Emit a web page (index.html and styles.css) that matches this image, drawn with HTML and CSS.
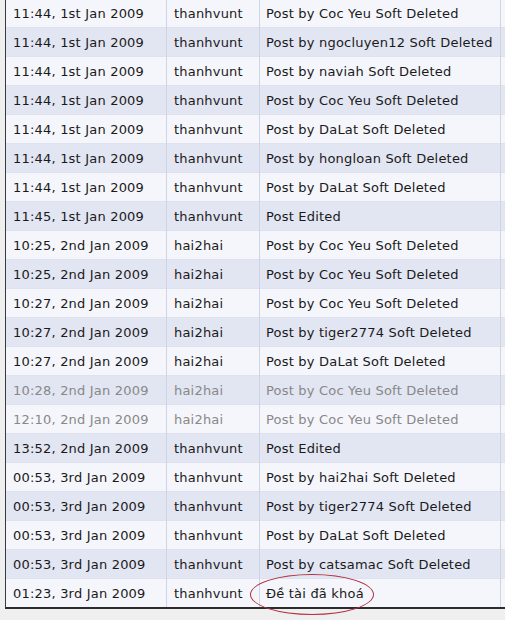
FILE: index.html
```html
<!DOCTYPE html>
<html>
<head>
<meta charset="utf-8">
<link rel="stylesheet" href="styles.css">
</head>
<body>
<div class="frame">
<table class="log">
<tr class="r1"><td>11:44, 1st Jan 2009</td><td>thanhvunt</td><td>Post by Coc Yeu Soft Deleted</td><td class="x"></td></tr>
<tr class="r2"><td>11:44, 1st Jan 2009</td><td>thanhvunt</td><td>Post by ngocluyen12 Soft Deleted</td><td class="x"></td></tr>
<tr class="r1"><td>11:44, 1st Jan 2009</td><td>thanhvunt</td><td>Post by naviah Soft Deleted</td><td class="x"></td></tr>
<tr class="r2"><td>11:44, 1st Jan 2009</td><td>thanhvunt</td><td>Post by Coc Yeu Soft Deleted</td><td class="x"></td></tr>
<tr class="r1"><td>11:44, 1st Jan 2009</td><td>thanhvunt</td><td>Post by DaLat Soft Deleted</td><td class="x"></td></tr>
<tr class="r2"><td>11:44, 1st Jan 2009</td><td>thanhvunt</td><td>Post by hongloan Soft Deleted</td><td class="x"></td></tr>
<tr class="r1"><td>11:44, 1st Jan 2009</td><td>thanhvunt</td><td>Post by DaLat Soft Deleted</td><td class="x"></td></tr>
<tr class="r2"><td>11:45, 1st Jan 2009</td><td>thanhvunt</td><td>Post Edited</td><td class="x"></td></tr>
<tr class="r1"><td>10:25, 2nd Jan 2009</td><td>hai2hai</td><td>Post by Coc Yeu Soft Deleted</td><td class="x"></td></tr>
<tr class="r2"><td>10:25, 2nd Jan 2009</td><td>hai2hai</td><td>Post by Coc Yeu Soft Deleted</td><td class="x"></td></tr>
<tr class="r1"><td>10:27, 2nd Jan 2009</td><td>hai2hai</td><td>Post by Coc Yeu Soft Deleted</td><td class="x"></td></tr>
<tr class="r2"><td>10:27, 2nd Jan 2009</td><td>hai2hai</td><td>Post by tiger2774 Soft Deleted</td><td class="x"></td></tr>
<tr class="r1"><td>10:27, 2nd Jan 2009</td><td>hai2hai</td><td>Post by DaLat Soft Deleted</td><td class="x"></td></tr>
<tr class="r2 faded"><td>10:28, 2nd Jan 2009</td><td>hai2hai</td><td>Post by Coc Yeu Soft Deleted</td><td class="x"></td></tr>
<tr class="r1 faded"><td>12:10, 2nd Jan 2009</td><td>hai2hai</td><td>Post by Coc Yeu Soft Deleted</td><td class="x"></td></tr>
<tr class="r2"><td>13:52, 2nd Jan 2009</td><td>thanhvunt</td><td>Post Edited</td><td class="x"></td></tr>
<tr class="r1"><td>00:53, 3rd Jan 2009</td><td>thanhvunt</td><td>Post by hai2hai Soft Deleted</td><td class="x"></td></tr>
<tr class="r2"><td>00:53, 3rd Jan 2009</td><td>thanhvunt</td><td>Post by tiger2774 Soft Deleted</td><td class="x"></td></tr>
<tr class="r1"><td>00:53, 3rd Jan 2009</td><td>thanhvunt</td><td>Post by DaLat Soft Deleted</td><td class="x"></td></tr>
<tr class="r2"><td>00:53, 3rd Jan 2009</td><td>thanhvunt</td><td>Post by catsamac Soft Deleted</td><td class="x"></td></tr>
<tr class="r1"><td>01:23, 3rd Jan 2009</td><td>thanhvunt</td><td class="mark"><span class="circled">Đề tài đã khoá</span></td><td class="x"></td></tr>
</table>
</div>
</body>
</html>
```
FILE: styles.css
```css
html, body {
  margin: 0;
  padding: 0;
  background: #efefef;
  width: 505px;
  height: 620px;
  overflow: hidden;
}
.frame {
  margin-top: -2px;
  margin-left: 5px;
  width: 500px;
  border-left: 1px solid #3a3a3a;
  border-bottom: 2px solid #2c2c2c;
  background: #f5f6fb;
}
.log {
  border-collapse: collapse;
  width: 499px;
  table-layout: fixed;
  font-family: "DejaVu Sans", Verdana, sans-serif;
  font-size: 13px;
  letter-spacing: 0.2px;
  color: #1a1a1a;
}
.log td {
  height: 28px;
  padding: 0 0 0 7px;
  border-right: 1px solid #cfd3e2;
  border-top: 1px solid #dfe2ee;
  white-space: nowrap;
  overflow: visible;
  vertical-align: middle;
}
.log td:nth-child(1) { width: 153px; }
.log td:nth-child(2) { width: 85px; }
.log td:nth-child(3) { width: 234px; padding-left: 6px; }
.log td.x { width: 6px; padding: 0; border-right: none; }
.r1 td { background: #f5f6fb; }
.r2 td { background: #e2e5f2; }
.faded td { color: #888; }
.mark { position: relative; }
.circled { position: relative; }
.circled::after {
  content: "";
  position: absolute;
  left: -16px;
  top: -12px;
  width: 122px;
  height: 39px;
  border: 1px solid #b03040;
  border-radius: 50%;
}
```
